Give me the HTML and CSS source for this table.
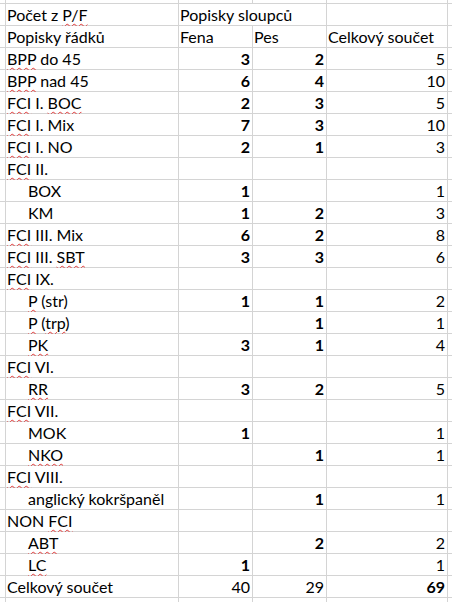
FILE: index.html
```html
<!DOCTYPE html>
<html lang="cs">
<head>
<meta charset="utf-8">
<title>Kontingenční tabulka</title>
<link rel="stylesheet" href="styles.css">
</head>
<body>
<div class="sheet">
  <div class="row edge"><span></span><span></span><span></span><span></span><span></span><span></span></div>
  <div class="row"><span></span><span class="l">Počet z <u class="sp">P/F</u></span><span class="l span2">Popisky sloupců</span><span></span><span></span></div>
  <div class="row"><span></span><span class="l">Popisky řádků</span><span class="l">Fena</span><span class="l">Pes</span><span class="l">Celkový součet</span><span></span></div>
  <div class="row"><span></span><span class="l"><u class="sp">BPP</u> do 45</span><span class="n b">3</span><span class="n b">2</span><span class="n">5</span><span></span></div>
  <div class="row"><span></span><span class="l"><u class="sp">BPP</u> nad 45</span><span class="n b">6</span><span class="n b">4</span><span class="n">10</span><span></span></div>
  <div class="row"><span></span><span class="l"><u class="sp">FCI</u> I. <u class="sp">BOC</u></span><span class="n b">2</span><span class="n b">3</span><span class="n">5</span><span></span></div>
  <div class="row"><span></span><span class="l"><u class="sp">FCI</u> I. Mix</span><span class="n b">7</span><span class="n b">3</span><span class="n">10</span><span></span></div>
  <div class="row"><span></span><span class="l"><u class="sp">FCI</u> I. NO</span><span class="n b">2</span><span class="n b">1</span><span class="n">3</span><span></span></div>
  <div class="row"><span></span><span class="l"><u class="sp">FCI</u> II.</span><span></span><span></span><span></span><span></span></div>
  <div class="row"><span></span><span class="l i">BOX</span><span class="n b">1</span><span></span><span class="n">1</span><span></span></div>
  <div class="row"><span></span><span class="l i">KM</span><span class="n b">1</span><span class="n b">2</span><span class="n">3</span><span></span></div>
  <div class="row"><span></span><span class="l"><u class="sp">FCI</u> III. Mix</span><span class="n b">6</span><span class="n b">2</span><span class="n">8</span><span></span></div>
  <div class="row"><span></span><span class="l"><u class="sp">FCI</u> III. <u class="sp">SBT</u></span><span class="n b">3</span><span class="n b">3</span><span class="n">6</span><span></span></div>
  <div class="row"><span></span><span class="l"><u class="sp">FCI</u> IX.</span><span></span><span></span><span></span><span></span></div>
  <div class="row"><span></span><span class="l i"><u class="sp">P</u> (str)</span><span class="n b">1</span><span class="n b">1</span><span class="n">2</span><span></span></div>
  <div class="row"><span></span><span class="l i"><u class="sp">P</u> (<u class="sp">trp</u>)</span><span></span><span class="n b">1</span><span class="n">1</span><span></span></div>
  <div class="row"><span></span><span class="l i"><u class="sp">PK</u></span><span class="n b">3</span><span class="n b">1</span><span class="n">4</span><span></span></div>
  <div class="row"><span></span><span class="l"><u class="sp">FCI</u> VI.</span><span></span><span></span><span></span><span></span></div>
  <div class="row"><span></span><span class="l i"><u class="sp">RR</u></span><span class="n b">3</span><span class="n b">2</span><span class="n">5</span><span></span></div>
  <div class="row"><span></span><span class="l"><u class="sp">FCI</u> VII.</span><span></span><span></span><span></span><span></span></div>
  <div class="row"><span></span><span class="l i">MOK</span><span class="n b">1</span><span></span><span class="n">1</span><span></span></div>
  <div class="row"><span></span><span class="l i"><u class="sp">NKO</u></span><span></span><span class="n b">1</span><span class="n">1</span><span></span></div>
  <div class="row"><span></span><span class="l"><u class="sp">FCI</u> VIII.</span><span></span><span></span><span></span><span></span></div>
  <div class="row"><span></span><span class="l i">anglický kokršpaněl</span><span></span><span class="n b">1</span><span class="n">1</span><span></span></div>
  <div class="row"><span></span><span class="l">NON <u class="sp">FCI</u></span><span></span><span></span><span></span><span></span></div>
  <div class="row"><span></span><span class="l i"><u class="sp">ABT</u></span><span></span><span class="n b">2</span><span class="n">2</span><span></span></div>
  <div class="row"><span></span><span class="l i"><u class="sp">LC</u></span><span class="n b">1</span><span></span><span class="n">1</span><span></span></div>
  <div class="row"><span></span><span class="l">Celkový součet</span><span class="n">40</span><span class="n">29</span><span class="n b">69</span><span></span></div>
  <div class="row edge"><span></span><span></span><span></span><span></span><span></span><span></span></div>
</div>
</body>
</html>
```
FILE: styles.css
```css
html, body {
  margin: 0;
  padding: 0;
  background: #ffffff;
}

.sheet {
  display: grid;
  grid-template-columns: 5px 172px 73px 73px 120px 4px;
  grid-template-rows: 3px repeat(27, 21px) 4px;
  gap: 1px;
  width: 452px;
  height: 602px;
  overflow: hidden;
  background: #d4d4d4;
  font-family: Lato, "Liberation Sans", sans-serif;
  font-size: 16px;
  color: #000000;
}

.row {
  display: contents;
}

.row > span {
  display: block;
  background: #ffffff;
  padding: 1px 2px 0 1px;
  line-height: 19px;
  white-space: nowrap;
  min-width: 0;
  overflow: visible;
}

.row > .n {
  text-align: right;
}

.row > .i {
  padding-left: 22px;
}

.span2 {
  grid-column: span 2;
}

.b {
  font-weight: 700;
}

.sp {
  text-decoration-line: underline;
  text-decoration-style: wavy;
  text-decoration-color: #e33b3b;
  text-decoration-thickness: 1px;
  text-underline-offset: 2px;
}
```
